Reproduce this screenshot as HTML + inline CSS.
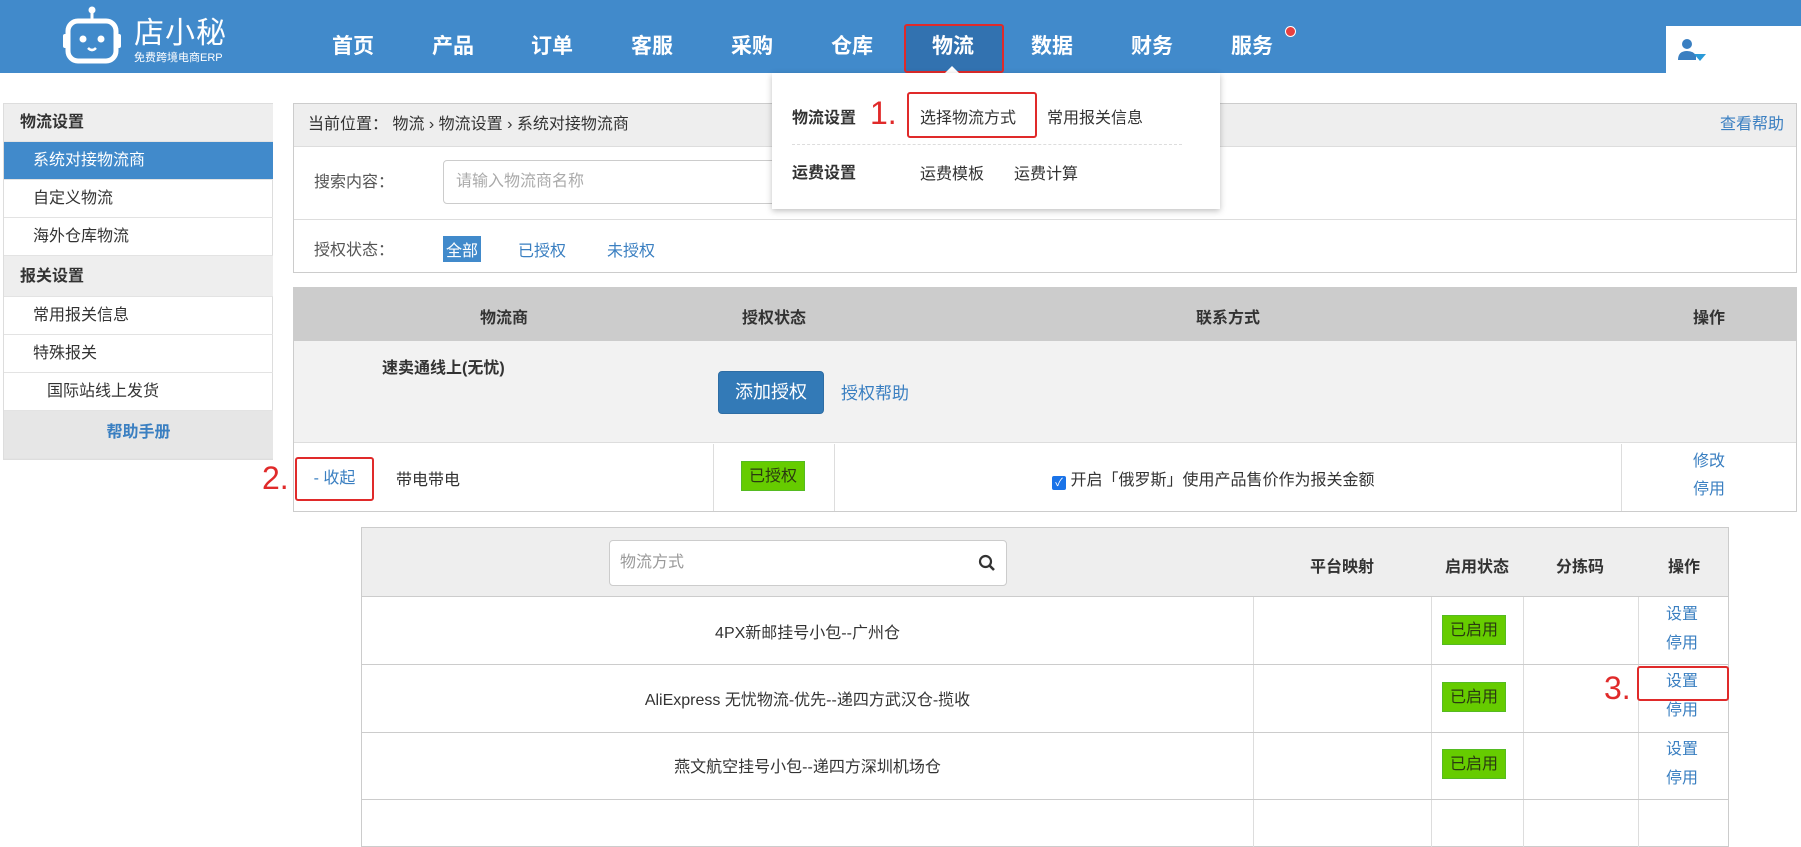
<!DOCTYPE html>
<html><head><meta charset="utf-8"><style>
*{box-sizing:border-box;margin:0;padding:0}
body{width:1801px;height:804px;overflow:hidden;background:#fff;font-family:"Liberation Sans","Noto Sans CJK SC",sans-serif;font-size:16px;color:#333;position:relative}
.a{position:absolute}
.nav{left:0;top:0;width:1801px;height:73px;background:#418acb}
.ni{position:absolute;top:30px;color:#fff;font-size:21px;font-weight:bold;width:80px;text-align:center;margin-left:-40px}
.sb div{position:absolute;left:0;width:269px;height:38px;line-height:38px;padding-left:29px;border-bottom:1px solid #e3e3e3}
.red{border:2px solid #e02a2a;border-radius:3px}
.rn{color:#e02a2a;font-size:32px}
.lk{color:#3a7fc1}
.g{background:#6c0;color:#2a3a10;display:inline-block;padding:0 7px;height:30px;line-height:30px;border:1px solid #5b2}
.tb{border:1px solid #ccc}
.vl{position:absolute;top:0;bottom:0;width:1px;background:#ddd}
.cell{position:absolute;text-align:center}
</style></head><body>
<div class="a nav">
 <svg class="a" style="left:62px;top:6px" width="60" height="58" viewBox="0 0 60 58"><circle cx="30" cy="4" r="3.5" fill="#fff"/><rect x="28.5" y="6" width="3" height="9" fill="#fff"/><rect x="6" y="15" width="48" height="40" rx="10" fill="none" stroke="#fff" stroke-width="5"/><rect x="1" y="28" width="5" height="14" rx="2" fill="#fff"/><rect x="54" y="28" width="5" height="14" rx="2" fill="#fff"/><circle cx="21" cy="33" r="3.5" fill="#fff"/><circle cx="39" cy="33" r="3.5" fill="#fff"/><path d="M26 42q4 4 8 0" stroke="#fff" stroke-width="2.5" fill="none"/></svg>
 <div class="a" style="left:134px;top:8px;color:#fff;font-size:30px;letter-spacing:1px">店小秘</div>
 <div class="a" style="left:134px;top:49px;color:#fff;font-size:11px">免费跨境电商ERP</div>
 <div class="ni" style="left:353px">首页</div><div class="ni" style="left:453px">产品</div><div class="ni" style="left:552px">订单</div><div class="ni" style="left:652px">客服</div><div class="ni" style="left:752px">采购</div><div class="ni" style="left:852px">仓库</div>
 <div class="a red" style="left:904px;top:24px;width:100px;height:49px;background:#3272b0"></div>
 <div class="ni" style="left:953px">物流</div>
 <div class="a" style="left:945px;top:66px;width:0;height:0;border-left:7px solid transparent;border-right:7px solid transparent;border-bottom:7px solid #fff"></div>
 <div class="ni" style="left:1052px">数据</div><div class="ni" style="left:1152px">财务</div><div class="ni" style="left:1252px">服务</div>
 <div class="a" style="left:1285px;top:26px;width:11px;height:11px;border-radius:50%;background:#e84040;border:1px solid #fff"></div>
 <div class="a" style="left:1666px;top:26px;width:135px;height:47px;background:#fff"></div>
 <svg class="a" style="left:1678px;top:38px" width="32" height="26" viewBox="0 0 32 26"><circle cx="9" cy="6" r="5" fill="#3a7fc1"/><path d="M0 22q0-9 9-9q7 0 9 5v4z" fill="#3a7fc1"/><path d="M16 16h12l-6 7z" fill="#2a9ad8"/></svg>
</div>
<div class="a sb" style="left:3px;top:103px;width:270px;height:357px;border:1px solid #ddd">
 <div style="top:0;background:#eee;font-weight:bold;padding-left:16px">物流设置</div>
 <div style="top:38px;background:#418acb;color:#fff">系统对接物流商</div>
 <div style="top:76px">自定义物流</div>
 <div style="top:114px">海外仓库物流</div>
 <div style="top:152px;background:#eee;font-weight:bold;padding-left:16px;height:41px;line-height:41px">报关设置</div>
 <div style="top:193px">常用报关信息</div>
 <div style="top:231px">特殊报关</div>
 <div style="top:269px;padding-left:43px">国际站线上发货</div>
 <div style="top:307px;height:48px;line-height:44px;background:#e6e6e6;color:#3a7fc1;font-weight:bold;text-align:center;padding-left:0">帮助手册</div>
</div>
<div class="a tb" style="left:293px;top:103px;width:1504px;height:170px">
 <div class="a" style="left:0;top:0;width:1502px;height:43px;background:#eee;border-bottom:1px solid #ddd;line-height:42px;padding-left:14px">当前位置： 物流 › 物流设置 › 系统对接物流商<span class="lk" style="position:absolute;right:12px">查看帮助</span></div>
 <div class="a" style="left:20px;top:64px;color:#555">搜索内容：</div>
 <div class="a" style="left:149px;top:56px;width:400px;height:44px;border:1px solid #ccc;border-radius:4px;color:#aaa;line-height:42px;padding-left:12px">请输入物流商名称</div>
 <div class="a" style="left:0;top:115px;width:1502px;height:1px;background:#ddd"></div>
 <div class="a" style="left:20px;top:132px;color:#555">授权状态：</div>
 <div class="a" style="left:149px;top:132px;background:#418acb;color:#fff;padding:1px 3px">全部</div>
 <div class="a lk" style="left:224px;top:133px">已授权</div>
 <div class="a lk" style="left:313px;top:133px">未授权</div>
</div>
<div class="a" style="left:772px;top:73px;width:448px;height:136px;background:#fff;box-shadow:0 2px 6px rgba(0,0,0,.25)">
 <div class="a" style="left:20px;top:31px;font-weight:bold">物流设置</div>
 <div class="a rn" style="left:98px;top:22px">1.</div>
 <div class="a red" style="left:135px;top:19px;width:130px;height:46px"></div>
 <div class="a" style="left:148px;top:31px">选择物流方式</div>
 <div class="a" style="left:275px;top:31px">常用报关信息</div>
 <div class="a" style="left:20px;top:71px;width:390px;border-top:1px dashed #ddd"></div>
 <div class="a" style="left:20px;top:86px;font-weight:bold">运费设置</div>
 <div class="a" style="left:148px;top:87px">运费模板</div>
 <div class="a" style="left:242px;top:87px">运费计算</div>
</div>
<div class="a tb" style="left:293px;top:287px;width:1504px;height:225px">
 <div class="a" style="left:0;top:0;width:1502px;height:53px;background:#ccc;font-weight:bold">
  <div class="cell" style="left:160px;width:100px;top:16px">物流商</div>
  <div class="cell" style="left:430px;width:100px;top:16px">授权状态</div>
  <div class="cell" style="left:884px;width:100px;top:16px">联系方式</div>
  <div class="cell" style="left:1365px;width:100px;top:16px">操作</div>
 </div>
 <div class="a" style="left:0;top:53px;width:1502px;height:102px;background:#f2f2f2;border-bottom:1px solid #ddd">
  <div class="a" style="left:88px;top:13px;font-weight:bold">速卖通线上(无忧)</div>
  <div class="a" style="left:424px;top:30px;width:106px;height:43px;background:#337ab7;border:1px solid #2e6da4;border-radius:4px;color:#fff;line-height:41px;text-align:center;font-size:18px">添加授权</div>
  <div class="a lk" style="left:547px;top:38px;font-size:17px">授权帮助</div>
 </div>
 <div class="a" style="left:0;top:156px;width:1502px;height:67px">
  <div class="vl" style="left:419px"></div><div class="vl" style="left:540px"></div><div class="vl" style="left:1327px"></div>
  <div class="a" style="left:102px;top:22px">带电带电</div>
  <div class="a" style="left:447px;top:17px"><span class="g">已授权</span></div>
  <div class="a" style="left:758px;top:22px"><span style="display:inline-block;width:14px;height:14px;background:#1a73e8;border-radius:2px;color:#fff;font-size:11px;line-height:14px;text-align:center;vertical-align:-1px">✓</span> 开启「俄罗斯」使用产品售价作为报关金额</div>
  <div class="a lk" style="left:1399px;top:4px;line-height:28px">修改<br>停用</div>
 </div>
</div>
<div class="a rn" style="left:262px;top:460px">2.</div>
<div class="a red" style="left:295px;top:457px;width:79px;height:44px;color:#3a7fc1;line-height:40px;text-align:center">- 收起</div>
<div class="a tb" style="left:361px;top:527px;width:1368px;height:320px">
 <div class="a" style="left:0;top:0;width:1366px;height:69px;background:#eee;border-bottom:1px solid #ccc;font-weight:bold">
  <div class="a" style="left:247px;top:12px;width:398px;height:46px;background:#fff;border:1px solid #ccc;border-radius:4px;color:#999;font-weight:normal;line-height:44px;padding-left:10px">物流方式
   <svg class="a" style="right:10px;top:13px" width="18" height="18" viewBox="0 0 18 18"><circle cx="7.5" cy="7.5" r="5.5" fill="none" stroke="#333" stroke-width="2.2"/><path d="M11.5 11.5L16 16" stroke="#333" stroke-width="2.6"/></svg></div>
  <div class="cell" style="left:930px;width:100px;top:25px">平台映射</div>
  <div class="cell" style="left:1065px;width:100px;top:25px">启用状态</div>
  <div class="cell" style="left:1168px;width:100px;top:25px">分拣码</div>
  <div class="cell" style="left:1272px;width:100px;top:25px">操作</div>
 </div>
 <div class="a" style="left:0;top:69px;width:1366px;height:250px">
  <div class="vl" style="left:891px"></div><div class="vl" style="left:1069px"></div><div class="vl" style="left:1161px"></div><div class="vl" style="left:1276px"></div>
  <div class="a" style="left:0;top:67px;width:1366px;height:1px;background:#ccc"></div>
  <div class="a" style="left:0;top:135px;width:1366px;height:1px;background:#ccc"></div>
  <div class="a" style="left:0;top:202px;width:1366px;height:1px;background:#ccc"></div>
  <div class="cell" style="left:0;width:891px;top:22px">4PX新邮挂号小包--广州仓</div>
  <div class="cell" style="left:0;width:891px;top:89px">AliExpress 无忧物流-优先--递四方武汉仓-揽收</div>
  <div class="cell" style="left:0;width:891px;top:156px">燕文航空挂号小包--递四方深圳机场仓</div>
  <div class="a" style="left:1080px;top:18px"><span class="g">已启用</span></div>
  <div class="a" style="left:1080px;top:85px"><span class="g">已启用</span></div>
  <div class="a" style="left:1080px;top:152px"><span class="g">已启用</span></div>
  <div class="a lk" style="left:1304px;top:3px;line-height:29px">设置<br>停用</div>
  <div class="a lk" style="left:1304px;top:70px;line-height:29px">设置<br>停用</div>
  <div class="a lk" style="left:1304px;top:138px;line-height:29px">设置<br>停用</div>
 </div>
</div>
<div class="a rn" style="left:1604px;top:670px">3.</div>
<div class="a red" style="left:1637px;top:666px;width:92px;height:35px"></div>
</body></html>
